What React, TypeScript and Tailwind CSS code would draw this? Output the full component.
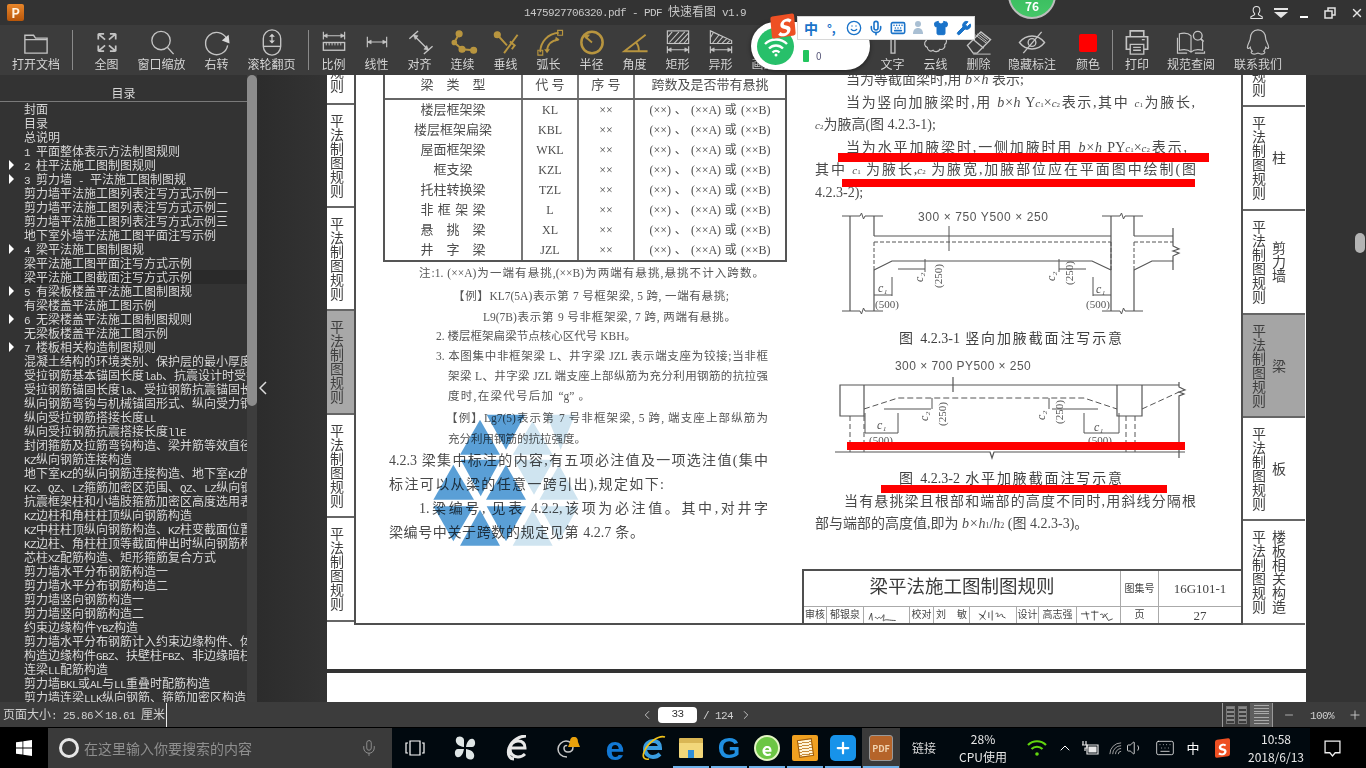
import type { ReactNode } from 'react';
import { ChevronLeft, ChevronRight, ChevronUp, Keyboard, Mic, Minus, Plus, Shirt, Smile, Volume1, Wrench, X } from 'lucide-react';

const GOLD = '#b8953f';

// SimSun look: Latin is half the width of a CJK glyph
function Sim({ text }: { text: string }) {
  return (
    <>
      {text.split(/([\x20-\x7e]+)/).map((part, i) =>
        /^[\x20-\x7e]+$/.test(part) ? (
          <span key={i} className="whitespace-pre font-['Liberation_Mono',monospace] text-[11px] tracking-[-0.6px]">{part}</span>
        ) : (
          <span key={i}>{part}</span>
        ),
      )}
    </>
  );
}

function Ico({ children, color }: { children: ReactNode; color?: string }) {
  return (
    <svg viewBox="0 0 30 30" className="h-[29px] w-[30px]" fill="none" stroke={color ?? '#c4c4c4'} strokeWidth="1.4">
      {children}
    </svg>
  );
}

const Dim = () => (
  <>
    <path d="M4 19v7M26 19v7M4 22.5h22" strokeWidth="1.2" />
    <path d="M4 22.500l4-2v4zM26 22.500l-4-2v4z" fill="#c4c4c4" strokeWidth="0.5" />
  </>
);

const hatch = 'M6 15L16 4M11 16L22 4M16 16L26 5M21 16L26 10M4 10L9 4';

const tools1 = [
  {
    label: '全图',
    icon: (
      <Ico>
        <path d="M6 6l7 6M6 6h6M6 6v6M24 6l-7 6M24 6h-6M24 6v6M6 24l7-6M6 24h6M6 24v-6M24 24l-7-6M24 24h-6M24 24v-6" strokeWidth="1.8" />
      </Ico>
    ),
  },
  {
    label: '窗口缩放',
    icon: (
      <Ico>
        <circle cx="14" cy="13" r="9.500" />
        <path d="M20.500 20L27 27" />
      </Ico>
    ),
  },
  {
    label: '右转',
    icon: (
      <Ico>
        <path d="M25 11A11.500 11.500 0 1 0 26 18" />
        <path d="M27 7l1 9-8-3z" fill="#d8d8d8" stroke="none" />
      </Ico>
    ),
  },
  {
    label: '滚轮翻页',
    icon: (
      <Ico>
        <rect x="6" y="2" width="18" height="26" rx="9" />
        <path d="M6 19h18" />
        <path d="M15 6l3 3h-6zM15 16l3-3h-6z" fill="#d8d8d8" stroke="none" />
        <path d="M15 8v6" />
      </Ico>
    ),
  },
];

const tools2 = [
  {
    label: '比例',
    icon: (
      <Ico>
        <path d="M4 4v8M26 4v8M4 8h22" strokeWidth="1.2" />
        <path d="M4 8l4-2v4zM26 8l-4-2v4z" fill="#c4c4c4" strokeWidth="0.5" />
        <rect x="4" y="15" width="22" height="8" />
        <path d="M7 15v3M10 15v3M13 15v3M16 15v3M19 15v3M22 15v3" strokeWidth="1" />
      </Ico>
    ),
  },
  {
    label: '线性',
    icon: (
      <Ico>
        <path d="M5 9v11M25 9v11M5 14.500h20" strokeWidth="1.2" />
        <path d="M5 14.500l4-2v4zM25 14.500l-4-2v4z" fill="#c4c4c4" strokeWidth="0.5" />
      </Ico>
    ),
  },
  {
    label: '对齐',
    icon: (
      <Ico>
        <path d="M4 11l9-8M19 27l9-8M8 7l16 16" strokeWidth="1.4" />
        <path d="M8 7l5 1-3 4zM24 23l-5-1 3-4z" fill="#c4c4c4" strokeWidth="0.5" />
      </Ico>
    ),
  },
  {
    label: '连续',
    icon: (
      <Ico color={GOLD}>
        <path d="M11 6L6 15l8 7 12 1" strokeWidth="2" />
        <g fill={GOLD}>
          <circle cx="11" cy="6" r="3" />
          <circle cx="14" cy="22" r="3" />
          <circle cx="26" cy="23" r="3" />
          <circle cx="6" cy="15" r="2.200" />
        </g>
      </Ico>
    ),
  },
  {
    label: '垂线',
    icon: (
      <Ico color={GOLD}>
        <path d="M6 7l10 11M27 7L13 26M19 14l5 4-3 4" strokeWidth="2" />
        <circle cx="6" cy="7" r="3" fill={GOLD} />
      </Ico>
    ),
  },
  {
    label: '弧长',
    icon: (
      <Ico color={GOLD}>
        <path d="M6 25C6 14 14 6 25 5M13 24c0-7 4-11 12-12" strokeWidth="2" />
        <path d="M3.500 23h5v5h-5zM24 2.500h5v5h-5z" strokeWidth="1.2" />
        <path d="M22 9l4 3-5 2zM10 22l3 4 3-4z" fill={GOLD} stroke="none" />
      </Ico>
    ),
  },
  {
    label: '半径',
    icon: (
      <Ico color={GOLD}>
        <circle cx="15" cy="15" r="11" strokeWidth="2.600" />
        <path d="M15 15L7 8" strokeWidth="1.800" />
        <path d="M6 6l7 1-4 5z" fill={GOLD} stroke="none" />
      </Ico>
    ),
  },
  {
    label: '角度',
    icon: (
      <Ico color={GOLD}>
        <path d="M26 7L4 24h24M16 15c2 2 3 5 3 9" strokeWidth="2" />
      </Ico>
    ),
  },
  {
    label: '矩形',
    icon: (
      <Ico>
        <rect x="4" y="3" width="22" height="13" strokeWidth="1.2" />
        <path d={hatch} strokeWidth="1.100" />
        <Dim />
      </Ico>
    ),
  },
  {
    label: '异形',
    icon: (
      <Ico>
        <path d="M4 3l22 10v3H4z" strokeWidth="1.2" />
        <path d="M4 10L7 5M6 16l7-9M11 16l6-7M16 16l5-5M21 16l3-3" strokeWidth="1.100" />
        <Dim />
      </Ico>
    ),
  },
  { label: '画线', icon: <Ico><path d="M5 25L24 6" /></Ico> },
  { label: '', icon: <Ico /> },
  { label: '', icon: <Ico /> },
  {
    label: '文字',
    icon: (
      <Ico>
        <path d="M8 5h14M13 5v21h4V5" />
      </Ico>
    ),
  },
  {
    label: '云线',
    icon: (
      <Ico>
        <path d="M8 6c2-3 5-2 6-1 2-2 5-2 6 0 3-1 6 2 4 5 3 2 2 6 0 7 1 3-2 6-5 5-1 3-6 3-7 1-3 2-6 0-6-3-3-1-4-5-1-7-2-3 0-6 3-7z" strokeWidth="1.200" />
      </Ico>
    ),
  },
  {
    label: '删除',
    icon: (
      <Ico>
        <path d="M3 18L17 4l10 8-14 14H9z" />
        <path d="M9 12l11 9" />
        <path d="M11 7L23 16M13 6l10 8M15 5l9 7" strokeWidth="1" />
        <path d="M9 27h18" strokeWidth="1" />
      </Ico>
    ),
  },
];

const tools3 = [
  {
    label: '隐藏标注',
    w: 'w-[64px]',
    icon: (
      <Ico>
        <path d="M2 15c7-9 19-9 26 0-7 9-19 9-26 0z" />
        <circle cx="15" cy="15" r="4" />
        <path d="M6 26L25 4" />
      </Ico>
    ),
  },
  {
    label: '颜色',
    w: 'w-[48px]',
    icon: (
      <div className="flex h-[29px] items-center">
        <div className="h-[18px] w-[18px] rounded-[2px] bg-[#ff0000]" />
      </div>
    ),
  },
];

const tools4 = [
  {
    label: '打印',
    w: 'w-[48px]',
    icon: (
      <Ico>
        <path d="M8 9V3h14v6M8 22H4V9h22v13h-4" strokeWidth="1.700" />
        <path d="M8 17h14v10H8zM11 20h8M11 23h8M20 12h3" strokeWidth="1.400" />
      </Ico>
    ),
  },
  {
    label: '规范查阅',
    w: 'w-[60px]',
    icon: (
      <Ico>
        <path d="M15 8c-3-3-8-3-12-2v17c4-1 9-1 12 2 3-3 8-3 12-2V14M15 8v17M1 10v16h10M29 24v2H19" strokeWidth="1.200" />
        <circle cx="22" cy="8" r="4.500" />
        <path d="M25 11l3 3" strokeWidth="1.800" />
      </Ico>
    ),
  },
  {
    label: '联系我们',
    w: 'w-[74px]',
    icon: (
      <Ico>
        <path d="M15 2c5 0 8 4 8 9 0 2 3 6 3 9 0 2-2 1-3 0 0 2-1 3-2 4 2 1 1 3-2 3-2 0-3-1-4-1s-2 1-4 1c-3 0-4-2-2-3-1-1-2-2-2-4-1 1-3 2-3 0 0-3 3-7 3-9 0-5 3-9 8-9z" strokeWidth="1.200" />
      </Ico>
    ),
  },
];

function Tool({ label, icon, w }: { label: string; icon: ReactNode; w: string }) {
  return (
    <div className={`flex shrink-0 flex-col items-center pt-[3px] ${w}`}>
      {icon}
      <div className="whitespace-nowrap text-[12px] leading-[14px] text-[#d4d4d4]">{label}</div>
    </div>
  );
}

const Sep = ({ className }: { className?: string }) => (
  <div className={`h-[40px] w-px shrink-0 self-center bg-[#8a8a8a] ${className ?? ''}`} />
);

function Toolbar() {
  return (
    <div className="flex h-[50px] bg-[#3c3c3c]">
      <Tool
        w="w-[72px]"
        label="打开文档"
        icon={
          <Ico>
            <path d="M3.500 26V7.500h9l2 3h12V26zM3.500 12h23" />
          </Ico>
        }
      />
      <Sep />
      <div className="ml-[6px] flex">
        {tools1.map((t) => (
          <Tool key={t.label} w="w-[55px]" label={t.label} icon={t.icon} />
        ))}
      </div>
      <Sep className="ml-[9px]" />
      <div className="ml-[3px] flex">
        {tools2.map((t, i) => (
          <Tool key={i} w="w-[43px]" label={t.label} icon={t.icon} />
        ))}
      </div>
      {tools3.map((t) => (
        <Tool key={t.label} {...t} />
      ))}
      <Sep />
      {tools4.map((t) => (
        <Tool key={t.label} {...t} />
      ))}
    </div>
  );
}

function TitleBar() {
  return (
    <div className="flex h-[25px] items-center bg-[#333333] pr-[2px]">
      <div className="ml-[7px] flex h-[17px] w-[17px] items-center justify-center rounded-[2px] bg-gradient-to-b from-[#e8862a] to-[#b85608] text-[13px] font-bold leading-none text-[#fff3e0]">
        P
      </div>
      <div className="ml-[500px] whitespace-nowrap pb-[2px] text-[12px] text-[#c8c8c8]">
        <Sim text="1475927706320.pdf - PDF 快速看图 v1.9" />
      </div>
      <div className="ml-auto flex items-center gap-[10px] text-[#e4e4e4]">
        <svg viewBox="0 0 16 16" className="h-[15px] w-[15px]" fill="none" stroke="currentColor" strokeWidth="1.100">
          <path d="M8 1.500c2.500 0 3.600 2 3.600 4 0 1.600-.8 2.800-1.500 3.600v1.200l4 2.300v1.900H2v-1.900l4-2.300V9.100C5.200 8.300 4.400 7.100 4.400 5.500c0-2 1.100-4 3.600-4z" />
        </svg>
        <svg viewBox="0 0 14 12" className="h-[12px] w-[14px]" fill="currentColor">
          <path d="M0 1h14v2H0zM0 5h14L7 11z" />
        </svg>
        <div className="mx-[2px] mt-[8px] h-[2px] w-[8px] bg-white" />
        <svg viewBox="0 0 12 12" className="ml-[4px] h-[12px] w-[12px]" fill="none" stroke="currentColor" strokeWidth="1.500">
          <path d="M1 4h7v7H1zM4 4V1h7v7H8" />
        </svg>
        <X className="ml-[4px] h-[14px] w-[14px]" strokeWidth={2.5} />
      </div>
    </div>
  );
}

const toc: [string, boolean?][] = [
  ['封面'],
  ['目录'],
  ['总说明'],
  ['1 平面整体表示方法制图规则'],
  ['2 柱平法施工图制图规则', true],
  ['3 剪力墙 - 平法施工图制图规', true],
  ['剪力墙平法施工图列表注写方式示例一'],
  ['剪力墙平法施工图列表注写方式示例二'],
  ['剪力墙平法施工图列表注写方式示例三'],
  ['地下室外墙平法施工图平面注写示例'],
  ['4 梁平法施工图制图规', true],
  ['梁平法施工图平面注写方式示例'],
  ['梁平法施工图截面注写方式示例'],
  ['5 有梁板楼盖平法施工图制图规', true],
  ['有梁楼盖平法施工图示例'],
  ['6 无梁楼盖平法施工图制图规则', true],
  ['无梁板楼盖平法施工图示例'],
  ['7 楼板相关构造制图规则', true],
  ['混凝土结构的环境类别、保护层的最小厚度'],
  ['受拉钢筋基本锚固长度lab、抗震设计时受拉钢筋'],
  ['受拉钢筋锚固长度la、受拉钢筋抗震锚固长度laE'],
  ['纵向钢筋弯钩与机械锚固形式、纵向受力钢筋'],
  ['纵向受拉钢筋搭接长度LL'],
  ['纵向受拉钢筋抗震搭接长度llE'],
  ['封闭箍筋及拉筋弯钩构造、梁并筋等效直径'],
  ['KZ纵向钢筋连接构造'],
  ['地下室KZ的纵向钢筋连接构造、地下室KZ的'],
  ['KZ、QZ、LZ箍筋加密区范围、QZ、LZ纵向钢筋'],
  ['抗震框架柱和小墙肢箍筋加密区高度选用表'],
  ['KZ边柱和角柱柱顶纵向钢筋构造'],
  ['KZ中柱柱顶纵向钢筋构造、KZ柱变截面位置'],
  ['KZ边柱、角柱柱顶等截面伸出时纵向钢筋构造'],
  ['芯柱XZ配筋构造、矩形箍筋复合方式'],
  ['剪力墙水平分布钢筋构造一'],
  ['剪力墙水平分布钢筋构造二'],
  ['剪力墙竖向钢筋构造一'],
  ['剪力墙竖向钢筋构造二'],
  ['约束边缘构件YBZ构造'],
  ['剪力墙水平分布钢筋计入约束边缘构件、体积'],
  ['构造边缘构件GBZ、扶壁柱FBZ、非边缘暗柱'],
  ['连梁LL配筋构造'],
  ['剪力墙BKL或AL与LL重叠时配筋构造'],
  ['剪力墙连梁LLK纵向钢筋、箍筋加密区构造'],
];

function Sidebar() {
  return (
    <div className="flex h-full w-[257px] shrink-0 bg-[#333333]">
      <div className="flex w-[247px] flex-col">
        <div className="h-[27px] shrink-0 border-b border-[#7a7a7a] pt-[10px] text-center text-[12px] leading-[16px] text-[#d8d8d8]">目录</div>
        <div className="min-h-0 flex-1 overflow-hidden">
          {toc.map(([text, arrow], i) => (
            <div key={i} className="flex h-[14px]">
              <div className="flex w-[21px] shrink-0 items-center pl-[9px]">
                {arrow && <div className="h-0 w-0 border-y-[5px] border-l-[5px] border-y-transparent border-l-white" />}
              </div>
              <div className={`min-w-0 flex-1 overflow-hidden whitespace-nowrap pl-[3px] text-[12px] leading-[14px] text-[#d8d8d8] ${i === 12 ? 'bg-[#2a2a2a]' : ''}`}>
                <Sim text={text} />
              </div>
            </div>
          ))}
        </div>
      </div>
      <div className="w-[10px] bg-[#3d3d3d]">
        <div className="h-[331px] rounded-full bg-[#8c8c8c]" />
      </div>
    </div>
  );
}

const rows = [
  ['楼层框架梁', 'KL'],
  ['楼层框架扁梁', 'KBL'],
  ['屋面框架梁', 'WKL'],
  ['框支梁', 'KZL'],
  ['托柱转换梁', 'TZL'],
  ['非 框 架 梁', 'L'],
  ['悬 挑 梁', 'XL'],
  ['井 字 梁', 'JZL'],
];

function BeamTable() {
  return (
    <div className="ml-[27px] w-[404px] border-x-2 border-b-2 border-[#555555] text-[13px] text-[#4d4d4d]">
      <div className="grid h-[25px] grid-cols-[138px_56px_56px_1fr] border-b-2 border-[#666666] leading-[20px]">
        <div className="flex justify-center border-r-2 border-[#777777]">
          <span className="w-[65px] [text-align-last:justify]">梁 类 型</span>
        </div>
        <div className="border-r-2 border-[#777777] text-center">代 号</div>
        <div className="border-r-2 border-[#777777] text-center">序 号</div>
        <div className="text-center">跨数及是否带有悬挑</div>
      </div>
      {rows.map(([name, code]) => (
        <div key={code} className="grid h-[20px] grid-cols-[138px_56px_56px_1fr] leading-[20px]">
          <div className="flex justify-center border-r-2 border-[#777777]">
            <span className={name.includes(' ') ? 'w-[65px] [text-align-last:justify]' : ''}>{name}</span>
          </div>
          <div className="border-r-2 border-[#777777] text-center text-[12px]">{code}</div>
          <div className="border-r-2 border-[#777777] text-center text-[12px]">××</div>
          <div className="flex justify-center">
            <span className="w-[121px] text-[12px] [text-align-last:justify]">(××) 、 (××A) 或 (××B)</span>
          </div>
        </div>
      ))}
    </div>
  );
}

const notes = [
  { t: '注:1. (××A)为一端有悬挑,(××B)为两端有悬挑,悬挑不计入跨数。', c: 'mt-[3px] ml-[63px] w-[345px]' },
  { t: '【例】KL7(5A)表示第 7 号框架梁, 5 跨, 一端有悬挑;', c: 'mt-[7px] ml-[97px] w-[276px]' },
  { t: 'L9(7B)表示第 9 号非框架梁, 7 跨, 两端有悬挑。', c: 'mt-[5px] ml-[127px] w-[253px]' },
  { t: '2. 楼层框架扁梁节点核心区代号 KBH。', c: 'mt-[3px] ml-[80px] w-[200px]' },
  { t: '3. 本图集中非框架梁 L、井字梁 JZL 表示端支座为铰接;当非框', c: 'mt-[4px] ml-[80px] w-[332px]' },
  { t: '架梁 L、井字梁 JZL 端支座上部纵筋为充分利用钢筋的抗拉强', c: 'mt-[4px] ml-[92px] w-[320px]' },
  { t: '度时,在梁代号后加 “g” 。', c: 'mt-[4px] ml-[92px] w-[142px]' },
  { t: '【例】Lg7(5)表示第 7 号非框架梁, 5 跨, 端支座上部纵筋为', c: 'mt-[6px] ml-[90px] w-[322px]' },
  { t: '充分利用钢筋的抗拉强度。', c: 'mt-[5px] ml-[92px] w-[136px]' },
];

const paras = [
  { t: '4.2.3 梁集中标注的内容,有五项必注值及一项选注值(集中', c: 'mt-[4px] ml-[33px] w-[379px]' },
  { t: '标注可以从梁的任意一跨引出),规定如下:', c: 'mt-[4px] ml-[33px] w-[275px]' },
  { t: '1.梁编号, 见表 4.2.2,该项为必注值。其中,对井字', c: 'mt-[4px] ml-[63px] w-[349px]' },
  { t: '梁编号中关于跨数的规定见第 4.2.7 条。', c: 'mt-[4px] ml-[33px] w-[255px]' },
];

function LeftColumn() {
  return (
    <div className="w-[440px] shrink-0">
      <BeamTable />
      {notes.map((n) => (
        <div key={n.t} className={`h-[16px] whitespace-nowrap text-[11.500px] leading-[16px] text-[#555555] [text-align-last:justify] ${n.c}`}>
          {n.t}
        </div>
      ))}
      {paras.map((n) => (
        <div key={n.t} className={`h-[20px] whitespace-nowrap text-[14px] leading-[20px] text-[#4a4a4a] [text-align-last:justify] ${n.c}`}>
          {n.t}
        </div>
      ))}
    </div>
  );
}

const Sub = ({ n }: { n: string }) => (
  <span className="text-[11px]">
    <i>c</i>
    <span className="text-[7px]">{n}</span>
  </span>
);

function Diagram1() {
  return (
    <svg viewBox="815 205 415 115" className="block h-[115px] w-[415px]" fill="none" stroke="#555555" strokeWidth="1">
      <path d="M843 216h18l1.500-3 2 6 1.500-3h18M1103 216h18l1.500-3 2 6 1.500-3h18M843 311h18l1.500 3 2-6 1.500 3h18M1103 311h18l1.500 3 2-6 1.500 3h18" />
      <path d="M851 216v95M875 216v20M875 270v41M875 236h237M1112 216v95M1135 216v20M1135 270v41M1135 236h39" strokeWidth="1.200" />
      <path d="M875 242h237M875 242v28M1112 242v28M1135 242v28M1135 242h39" strokeDasharray="4 2" />
      <path d="M875 270l18-9h200l19 9M1135 270l18-9h21M1174 228v18l6 3-6 2 6 2-6 3v14" strokeWidth="1.200" />
      <path d="M950 226v25M926 259v13M899 269h27M1060 259v13M1060 269h27M893 277v19M875 295h18M1094 277v19M1094 295h18" />
      <g fill="#555555" stroke="none" fontFamily="'Liberation Serif', serif">
        <text x="919" y="221" fontSize="12" letterSpacing="0.6" fontFamily="'Liberation Sans', sans-serif">300 × 750  Y500 × 250</text>
        <text x="879" y="292" fontSize="12" fontStyle="italic">c₁</text>
        <text x="1097" y="293" fontSize="12" fontStyle="italic">c₁</text>
        <text x="876" y="308" fontSize="11">(500)</text>
        <text x="1087" y="308" fontSize="11">(500)</text>
        <text transform="translate(924 282) rotate(-90)" fontSize="12" fontStyle="italic">c₂</text>
        <text transform="translate(1056 281) rotate(-90)" fontSize="12" fontStyle="italic">c₂</text>
        <text transform="translate(943 288) rotate(-90)" fontSize="11">(250)</text>
        <text transform="translate(1074 285) rotate(-90)" fontSize="11">(250)</text>
      </g>
    </svg>
  );
}

function Diagram2() {
  return (
    <svg viewBox="815 352 415 115" className="block h-[115px] w-[415px]" fill="none" stroke="#555555" strokeWidth="1">
      <path d="M841 385h339M841 385h24v31h-24zM1118 385h25v31h-25zM954 377v15M1180 382v5l6 3-6 2 5 2-5 2v62" strokeWidth="1.200" />
      <path d="M865 409l34-11h186l33 11M1143 409l37-17" strokeDasharray="6 3" />
      <path d="M885 409h47M1053 409h46M933 398v11M1050 398v11M866 413v20M899 413v20M866 433h33M1085 413v20M1120 413v20M1085 433h35" />
      <path d="M851 416v36M865 416v36M1127 416v36M1136 416v36" strokeDasharray="5 3" />
      <path d="M836 452h155l2 6 2-6h191" strokeWidth="1.200" />
      <g fill="#555555" stroke="none" fontFamily="'Liberation Serif', serif">
        <text x="896" y="370" fontSize="12" letterSpacing="0.45" fontFamily="'Liberation Sans', sans-serif">300 × 700  PY500 × 250</text>
        <text x="878" y="429" fontSize="12" fontStyle="italic">c₁</text>
        <text x="1095" y="431" fontSize="12" fontStyle="italic">c₁</text>
        <text x="870" y="444" fontSize="11">(500)</text>
        <text x="1089" y="444" fontSize="11">(500)</text>
        <text transform="translate(929 421) rotate(-90)" fontSize="12" fontStyle="italic">c₂</text>
        <text transform="translate(1046 420) rotate(-90)" fontSize="12" fontStyle="italic">c₂</text>
        <text transform="translate(947 426) rotate(-90)" fontSize="11">(250)</text>
        <text transform="translate(1064 424) rotate(-90)" fontSize="11">(250)</text>
      </g>
    </svg>
  );
}

function RightColumn() {
  const line = 'h-[22.6px] whitespace-nowrap text-[14px] leading-[22.6px] text-[#4a4a4a]';
  return (
    <div className="-mt-[6px] w-[415px] shrink-0">
      <div className={`${line} ml-[32px]`}>当为等截面梁时,用 <i>b×h</i> 表示;</div>
      <div className={`${line} ml-[32px] w-[349px] [text-align-last:justify]`}>
        当为竖向加腋梁时,用 <i>b×h</i> Y<Sub n="1" />×<Sub n="2" />表示,其中 <Sub n="1" />为腋长,
      </div>
      <div className={`${line} ml-[1px]`}>
        <Sub n="2" />为腋高(图 4.2.3-1);
      </div>
      <div className={`${line} ml-[32px] w-[341px] [text-align-last:justify]`}>
        当为水平加腋梁时,一侧加腋时用 <i>b×h</i> PY<Sub n="1" />×<Sub n="2" />表示,
      </div>
      <div className={`${line} ml-[1px] w-[381px] [text-align-last:justify]`}>
        其中 <Sub n="1" /> 为腋长,<Sub n="2" /> 为腋宽,加腋部位应在平面图中绘制(图
      </div>
      <div className={`${line} ml-[1px]`}>4.2.3-2);</div>
      <Diagram1 />
      <div className="mt-[9px] h-[20px] text-[14px] leading-[20px] text-[#3f3f3f]">
        <div className="ml-[85px] w-[223px] [text-align-last:justify]">图 4.2.3-1 竖向加腋截面注写示意</div>
      </div>
      <div className="h-[3px]" />
      <Diagram2 />
      <div className="mt-[2px] h-[20px] text-[14px] leading-[20px] text-[#3f3f3f]">
        <div className="ml-[85px] w-[223px] [text-align-last:justify]">图 4.2.3-2 水平加腋截面注写示意</div>
      </div>
      <div className={`${line} mt-[2px] ml-[30px] w-[352px] [text-align-last:justify]`}>当有悬挑梁且根部和端部的高度不同时,用斜线分隔根</div>
      <div className={`${line} ml-[1px]`}>
        部与端部的高度值,即为 <i>b×h</i>
        <span className="text-[8px]">1</span>/<i>h</i>
        <span className="text-[8px]">2</span> (图 4.2.3-3)。
      </div>
    </div>
  );
}

const Signature = ({ d }: { d: string }) => (
  <svg viewBox="0 0 46 18" className="h-[15px] w-full" fill="none" stroke="#333333" strokeWidth="1">
    <path d={d} />
  </svg>
);

function TitleBlock() {
  const cell = 'flex items-center justify-center border-r border-[#aaaaaa]';
  return (
    <div className="ml-auto h-[54px] w-[439px] border-l-2 border-t-2 border-[#4f4f4f] text-[#444444]">
      <div className="grid h-[36px] grid-cols-[317px_38px_1fr] border-b border-[#aaaaaa]">
        <div className={`${cell} pb-[2px] text-[18.500px] text-[#3a3a3a]`}>梁平法施工图制图规则</div>
        <div className={`${cell} text-[10px]`}>图集号</div>
        <div className="flex items-center justify-center text-[13px]">16G101-1</div>
      </div>
      <div className="grid h-[16px] grid-cols-[23px_37px_46px_24px_36px_47px_22px_38px_44px_38px_1fr] text-[10px] leading-none">
        <div className={cell}>审核</div>
        <div className={cell}>郁银泉</div>
        <div className={cell}><Signature d="M2 14l3-8 1 9M9 12c2-3 2 3 4 0s2 2 4 0 3-6 3-3-2 8 0 6 6 0 14 0" /></div>
        <div className={cell}>校对</div>
        <div className={`${cell} gap-[11px]`}><span>刘</span><span>敏</span></div>
        <div className={cell}><Signature d="M6 7l6 3M14 3c-1 5-4 9-7 11M8 8l6 6M18 5v7M22 3v12M26 7c3-2 4 0 2 3 2 0 3 0 4-2 2-1 3 0 2 2l4 2" /></div>
        <div className={cell}>设计</div>
        <div className={cell}>高志强</div>
        <div className={cell}><Signature d="M2 7h10M8 4l2 10M14 5h9M18 3v12M25 8c3-2 5 1 3 4l6-6M30 7l5 8 5-2" /></div>
        <div className={cell}>页</div>
        <div className="flex items-center justify-center text-[13px]">27</div>
      </div>
    </div>
  );
}

const leftTabs = [
  { h: 'h-[30px] items-end pb-[10px]', t: '规则' },
  { h: 'h-[103px] items-center', t: '平法制图规则' },
  { h: 'h-[103px] items-center', t: '平法制图规则' },
  { h: 'h-[104px] items-center bg-[#a8a8a8]', t: '平法制图规则' },
  { h: 'h-[103px] items-center', t: '平法制图规则' },
  { h: 'h-[104px] items-center', t: '平法制图规则' },
];

const rightTabs = [
  { h: 'h-[32px] items-end pb-[8px]', t: '规则', s: '' },
  { h: 'h-[104px] items-center', t: '平法制图规则', s: '柱' },
  { h: 'h-[104px] items-center', t: '平法制图规则', s: '剪力墙' },
  { h: 'h-[103px] items-center bg-[#a5a5a5]', t: '平法制图规则', s: '梁' },
  { h: 'h-[103px] items-center', t: '平法制图规则', s: '板' },
  { h: 'h-[104px] items-center', t: '平法制图规则', s: '楼板相关构造' },
];

const Vert = ({ t }: { t: string }) => (
  <span className="whitespace-nowrap text-[14px] leading-[14px] text-[#3f3f3f] [writing-mode:vertical-rl]">{t}</span>
);

// blue triangle watermark, sits over the scanned text
function Watermark() {
  const dark = ['390,285 510,285 450,180', '470,165 585,165 528,270', '392,300 512,300 452,410', '310,420 432,420 370,315', '468,420 588,420 528,315', '310,440 432,440 370,545', '390,558 510,558 450,450', '470,440 588,440 528,545'];
  const light = ['548,285 668,285 608,185', '650,165 735,165 692,270', '552,300 672,300 612,405', '628,420 745,420 687,315', '548,558 668,558 608,450', '630,440 745,440 687,545'];
  return (
    <svg viewBox="300 160 450 400" className="pointer-events-none absolute left-[103px] top-[338px] h-[133.300px] w-[150px] mix-blend-multiply">
      {dark.map((p) => <polygon key={p} points={p} fill="#5a9fd6" />)}
      {light.map((p) => <polygon key={p} points={p} fill="#cfe4f0" />)}
    </svg>
  );
}

function Page() {
  return (
    <div className="relative flex h-[594px] shrink-0 overflow-hidden bg-white font-['Liberation_Serif','Noto_Sans_CJK_SC',serif]">
      <div className="flex w-[27px] shrink-0 flex-col">
        {leftTabs.map((tab, i) => (
          <div key={i} className={`flex shrink-0 justify-start border-b-2 border-[#666666] pl-[1px] ${tab.h}`}>
            <Vert t={tab.t} />
          </div>
        ))}
      </div>
      <div className="flex h-[550px] w-[889px] shrink-0 flex-col border-x-2 border-b-2 border-[#4f4f4f] blur-[0.3px]">
        <div className="flex h-[494px]">
          <LeftColumn />
          <div className="w-[18px] shrink-0" />
          <RightColumn />
        </div>
        <div className="mt-auto">
          <TitleBlock />
        </div>
      </div>
      <div className="flex w-[62px] shrink-0 flex-col">
        {rightTabs.map((tab, i) => (
          <div key={i} className={`flex shrink-0 gap-[6px] border-b-2 border-[#666666] pl-[7px] ${tab.h}`}>
            <Vert t={tab.t} />
            {tab.s && <Vert t={tab.s} />}
          </div>
        ))}
      </div>
      <Watermark />
      {/* red marks the user drew over the page */}
      <div className="absolute left-[511px] top-[78px] h-[9px] w-[371px] bg-[#ff0000]" />
      <div className="absolute left-[515px] top-[104px] h-[8px] w-[353px] bg-[#ff0000]" />
      <div className="absolute left-[520px] top-[367px] h-[8px] w-[338px] bg-[#ff0000]" />
      <div className="absolute left-[554px] top-[410px] h-[8px] w-[286px] bg-[#ff0000]" />
    </div>
  );
}

function Viewer() {
  return (
    <div className="relative flex h-[627px] bg-[#333333]">
      <Sidebar />
      <div className="w-[70px] shrink-0 bg-gradient-to-r from-[#2c2c2c] to-[#333333] pl-[2px] pt-[306px]">
        <svg viewBox="0 0 8 14" className="h-[14px] w-[8px]" fill="none" stroke="#dddddd" strokeWidth="1.500">
          <path d="M7 1L1 7l6 6" />
        </svg>
      </div>
      <div className="flex w-[979px] shrink-0 flex-col gap-[4px] overflow-hidden">
        <Page />
        <div className="h-[40px] shrink-0 bg-white" />
      </div>
      <div className="flex-1 bg-[#333333] pl-[49px] pt-[158px]">
        <div className="h-[20px] w-[10px] rounded-full bg-[#b4b4b4]" />
      </div>
    </div>
  );
}

function StatusBar() {
  return (
    <div className="flex h-[26px] items-center border-b border-black bg-[#3c3c3c] text-[12px] text-[#d0d0d0]">
      <div className="flex w-[640px] shrink-0 items-center pl-[3px]">
        <span className="whitespace-nowrap"><Sim text="页面大小: 25.86×18.61 厘米" /></span>
        <div className="ml-[1px] h-[24px] w-px bg-[#eeeeee]" />
      </div>
      <ChevronLeft className="h-[14px] w-[14px]" strokeWidth={1.5} />
      <div className="ml-[4px] flex h-[16px] w-[39px] items-center justify-center rounded-[4px] bg-white text-[#333333]">
        <Sim text="33" />
      </div>
      <div className="ml-[6px] w-[36px] whitespace-nowrap"><Sim text="/ 124" /></div>
      <ChevronRight className="h-[14px] w-[14px]" strokeWidth={1.5} />
      <div className="ml-[469px] flex h-[24px] items-center border-x border-[#9a9a9a]">
        <div className="flex h-[20px] w-[27px] justify-center gap-[3px] px-[3px] py-[1px]">
          <div className="flex-1 border border-[#777777] bg-[repeating-linear-gradient(#888_0_2px,transparent_2px_4px)]" />
          <div className="flex-1 border border-[#777777] bg-[repeating-linear-gradient(#888_0_2px,transparent_2px_4px)]" />
        </div>
        <div className="flex h-[24px] w-[22px] flex-col items-center justify-center gap-[3px] bg-[#5e5e5e]">
          <div className="h-[9px] w-[15px] border-b border-[#aaaaaa] bg-[repeating-linear-gradient(#aaa_0_1px,transparent_1px_3px)]" />
          <div className="h-[7px] w-[15px] bg-[repeating-linear-gradient(#aaa_0_1px,transparent_1px_3px)]" />
        </div>
      </div>
      <Minus className="ml-[10px] h-[12px] w-[12px]" strokeWidth={1.5} />
      <div className="ml-[13px] w-[28px] text-center"><Sim text="100%" /></div>
      <Plus className="ml-[12px] h-[14px] w-[14px]" strokeWidth={1.5} />
    </div>
  );
}

const App16 = ({ w, active, bar, children }: { w: string; active?: boolean; bar?: boolean; children: ReactNode }) => (
  <div className={`relative flex h-full shrink-0 items-center justify-center ${w} ${active ? 'bg-[#3a3a3a]' : ''}`}>
    {children}
    {bar && <div className="absolute bottom-0 left-[1px] right-[1px] h-[2px] bg-[#6fb2ea]" />}
  </div>
);

function Taskbar() {
  return (
    <div className="flex h-[40px] bg-[#01090f] text-white">
      <div className="flex w-[48px] shrink-0 items-center justify-center bg-black">
        <svg viewBox="0 0 16 16" className="h-[16px] w-[16px]" fill="#ffffff">
          <path d="M0 2.300l6.500-.9v6.200H0zM7.300 1.300L16 0v7.600H7.300zM0 8.400h6.500v6.200L0 13.700zM7.300 8.400H16V16l-8.700-1.300z" />
        </svg>
      </div>
      <div className="flex w-[344px] shrink-0 items-center bg-[#3a3a3a] pl-[11px]">
        <div className="h-[20px] w-[20px] rounded-full border-[3px] border-[#e6e6e6]" />
        <div className="ml-[5px] whitespace-nowrap text-[14px] text-[#8f8f8f]">在这里输入你要搜索的内容</div>
        <Mic className="ml-[108px] h-[18px] w-[18px] text-[#8f8f8f]" strokeWidth={1.3} />
      </div>
      <App16 w="w-[46px]">
        <svg viewBox="0 0 20 16" className="h-[16px] w-[20px]" fill="none" stroke="#ffffff" strokeWidth="1.200">
          <path d="M5 1h10v14H5zM3 3H1v10h2M17 3h2v10h-2" />
        </svg>
      </App16>
      <App16 w="w-[54px]">
        <svg viewBox="0 0 22 24" className="h-[24px] w-[22px]" fill="#dfe6e6">
          <path d="M10 11C4 10 1 7 2 3s8-3 8 1zM12 11c1-6 4-9 7-8s3 8-1 8zM12 13c6 1 9 4 8 8s-8 3-8-1zM10 13c-1 6-4 9-7 8s-3-8 1-8z" />
        </svg>
      </App16>
      <App16 w="w-[50px]">
        <svg viewBox="0 0 24 26" className="h-[26px] w-[24px]" fill="none" stroke="#e8e8e8" strokeWidth="3">
          <path d="M4 13h16c0-5-3-7-7-7s-8 3-8 8 4 8 8 8c3 0 5-1 7-3M21 1c-6 0-14 4-17 12-2 7 1 11 5 11" />
        </svg>
      </App16>
      <App16 w="w-[54px]">
        <svg viewBox="0 0 30 24" className="h-[24px] w-[30px]" fill="none">
          <path d="M13 21c-6 0-9-4-9-8s4-8 8-8 7 3 7 6-2 5-5 5-4-2-4-4 2-3 3-2" stroke="#c8c8c8" strokeWidth="1.500" />
          <path d="M20 1c3 0 4 2 4 5l2 5H14l2-5c0-3 1-5 4-5z" fill="#e9a10c" />
        </svg>
      </App16>
      <App16 w="w-[38px]">
        <span className="font-['Liberation_Sans',sans-serif] text-[34px] font-bold leading-[30px] text-[#1278d4]">e</span>
      </App16>
      <App16 w="w-[38px]">
        <svg viewBox="0 0 26 26" className="h-[28px] w-[26px]" fill="none">
          <path d="M5 13h15c0-5-3-7-7-7s-8 3-8 8 4 8 8 8c3 0 5-1 7-3" stroke="#3a9de0" strokeWidth="4" />
          <path d="M25 2c-6-2-17 5-21 15-2 5 0 8 5 7" stroke="#f2c318" strokeWidth="1.600" />
        </svg>
      </App16>
      <App16 w="w-[38px]" bar>
        <div className="h-[20px] w-[24px] rounded-[1px] border-t-[5px] border-[#d9b654] bg-[#f2d77a] pl-[9px] pt-[7px]">
          <div className="h-[8px] w-[6px] bg-[#2f8ed8]" />
        </div>
      </App16>
      <App16 w="w-[38px]" bar>
        <span className="font-['Liberation_Sans',sans-serif] text-[29px] font-bold leading-none text-[#1f8ee0]">G</span>
      </App16>
      <App16 w="w-[38px]" bar>
        <div className="flex h-[26px] w-[26px] items-center justify-center rounded-full border-2 border-[#e3f5c4] bg-[#6cc644] text-[18px] font-bold leading-none">e</div>
      </App16>
      <App16 w="w-[38px]" bar>
        <div className="flex h-[26px] w-[26px] items-center justify-center rounded-[2px] bg-[#f0a020]">
          <div className="h-[18px] w-[15px] rotate-[-8deg] border border-[#9a5b10] bg-[repeating-linear-gradient(#fff5d8_0_2px,#c98d3a_2px_3px)]" />
        </div>
      </App16>
      <App16 w="w-[38px]" bar>
        <div className="flex h-[26px] w-[26px] items-center justify-center rounded-[5px] bg-[#1793ea]">
          <Plus className="h-[18px] w-[18px] text-white" strokeWidth={3} />
        </div>
      </App16>
      <App16 w="w-[38px]" active bar>
        <div className="flex h-[26px] w-[24px] items-center justify-center rounded-[3px] border border-[#999999] bg-[#b5642a] text-[9px] font-bold leading-none text-[#f1d3b0]">PDF</div>
      </App16>
      <App16 w="w-[48px]"><span className="text-[12px] text-[#d8d8d8]">链接</span></App16>
      <App16 w="w-[70px]">
        <div className="text-center text-[12px] leading-[18px] text-[#e8e8e8]">
          <div>28%</div>
          <div>CPU使用</div>
        </div>
      </App16>
      <App16 w="w-[38px]">
        <svg viewBox="0 0 20 18" className="h-[18px] w-[20px]" fill="none" stroke="#62d60f" strokeWidth="2.200">
          <path d="M1 6c5-5 13-5 18 0M4.500 10c3-3 8-3 11 0" />
          <circle cx="10" cy="15" r="1.800" fill="#62d60f" stroke="none" />
        </svg>
      </App16>
      <App16 w="w-[18px]"><ChevronUp className="h-[16px] w-[16px]" strokeWidth={1.5} /></App16>
      <App16 w="w-[32px]">
        <svg viewBox="0 0 18 16" className="h-[16px] w-[18px]" fill="none" stroke="#e8e8e8" strokeWidth="1.200">
          <path d="M6 5h11v9H6z" />
          <path d="M8 7h7v5H8z" fill="#e8e8e8" />
          <path d="M2 1v4M5 1v4M1 5h5v3H4v3" />
        </svg>
      </App16>
      <App16 w="w-[18px]">
        <svg viewBox="0 0 16 16" className="h-[15px] w-[15px]" fill="none" stroke="#a8a8a8" strokeWidth="1">
          <path d="M2 14a12 12 0 0 1 12-12M5 14a9 9 0 0 1 9-9M8 14a6 6 0 0 1 6-6M11 14a3 3 0 0 1 3-3" />
        </svg>
      </App16>
      <App16 w="w-[22px]"><Volume1 className="h-[18px] w-[18px] text-[#e0e0e0]" strokeWidth={1.2} /></App16>
      <App16 w="w-[38px]"><Keyboard className="h-[20px] w-[24px] text-[#e8e8e8]" strokeWidth={1} /></App16>
      <App16 w="w-[18px]"><span className="text-[13px]">中</span></App16>
      <App16 w="w-[40px]">
        <div className="flex h-[18px] w-[15px] -skew-y-[8deg] items-center justify-center rounded-[2px] bg-[#ee4f22] text-[15px] font-bold leading-none">S</div>
      </App16>
      <App16 w="w-[68px]">
        <div className="text-center text-[12px] leading-[18px] text-[#e8e8e8]">
          <div>10:58</div>
          <div>2018/6/13</div>
        </div>
      </App16>
      <div className="flex h-full flex-1 items-center bg-black pl-[14px]">
        <svg viewBox="0 0 16 16" className="h-[17px] w-[17px]" fill="none" stroke="#f0f0f0" strokeWidth="1.200">
          <path d="M1 1h14v11h-4.500L8 15l-2.500-3H1z" />
        </svg>
      </div>
    </div>
  );
}

function Overlays() {
  return (
    <>
      {/* network widget */}
      <div className="absolute left-[751px] top-[22px] h-[48px] w-[119px] rounded-full bg-white shadow-[0_1px_4px_rgba(0,0,0,0.5)]">
        <div className="absolute left-[6px] top-[6px] flex h-[37px] w-[37px] items-center justify-center rounded-full bg-[#27c06a]">
          <svg viewBox="0 0 24 20" className="h-[20px] w-[24px]" fill="none" stroke="#ffffff" strokeWidth="2.400">
            <path d="M1 7c6-6 16-6 22 0M5 11.500c4-4 10-4 14 0" />
            <path d="M8.500 15.500c2-2 5-2 7 0" />
            <circle cx="12" cy="18" r="1.500" fill="#ffffff" stroke="none" />
          </svg>
        </div>
        <div className="absolute left-[52px] top-[28px] h-[12px] w-[6px] rounded-[1px] bg-[#22c55e]" />
        <div className="absolute left-[65px] top-[27px] text-[10px] leading-[14px] text-[#555577]">0</div>
      </div>
      {/* sogou status bar */}
      <div className="absolute left-[797px] top-[16px] flex h-[24px] w-[178px] items-center border border-[#d8d8d8] bg-white pl-[6px] text-[#1a73c9]">
        <span className="w-[20px] text-[14px] font-bold leading-none">中</span>
        <span className="ml-[3px] w-[19px] text-[12px] font-bold leading-none">°,</span>
        <Smile className="h-[16px] w-[16px]" strokeWidth={2} />
        <Mic className="ml-[6px] h-[16px] w-[16px]" strokeWidth={2.4} />
        <Keyboard className="ml-[6px] h-[16px] w-[16px]" strokeWidth={2.4} />
        <svg viewBox="0 0 16 16" className="ml-[6px] h-[16px] w-[16px]" fill="#a9bfd3">
          <circle cx="6" cy="4" r="3" />
          <path d="M1 14c0-4 2-6 5-6s5 2 5 6z" />
        </svg>
        <Shirt className="ml-[5px] h-[16px] w-[16px]" fill="#1a73c9" strokeWidth={1.5} />
        <Wrench className="ml-[7px] h-[16px] w-[16px]" fill="#1a73c9" strokeWidth={1.5} />
      </div>
      <div className="absolute left-[771px] top-[15px] flex h-[22px] w-[24px] -rotate-[9deg] -skew-x-[4deg] items-center justify-center rounded-[2px] bg-[#ee5024] text-[22px] font-bold italic leading-none text-white">
        S
      </div>
      {/* score ball */}
      <div className="absolute left-[1008px] top-[-29px] flex h-[48px] w-[48px] items-end justify-center rounded-full border-2 border-[#bdbdbd] bg-gradient-to-b from-[#2fb457] to-[#45c768] pb-[4px] text-[12px] font-bold leading-[14px] text-white">
        76
      </div>
    </>
  );
}

export default function App() {
  return (
    <div className="relative h-[768px] w-[1366px] overflow-hidden bg-[#333333] font-['Noto_Sans_CJK_SC',sans-serif]">
      <TitleBar />
      <Toolbar />
      <Viewer />
      <StatusBar />
      <Taskbar />
      <Overlays />
    </div>
  );
}
